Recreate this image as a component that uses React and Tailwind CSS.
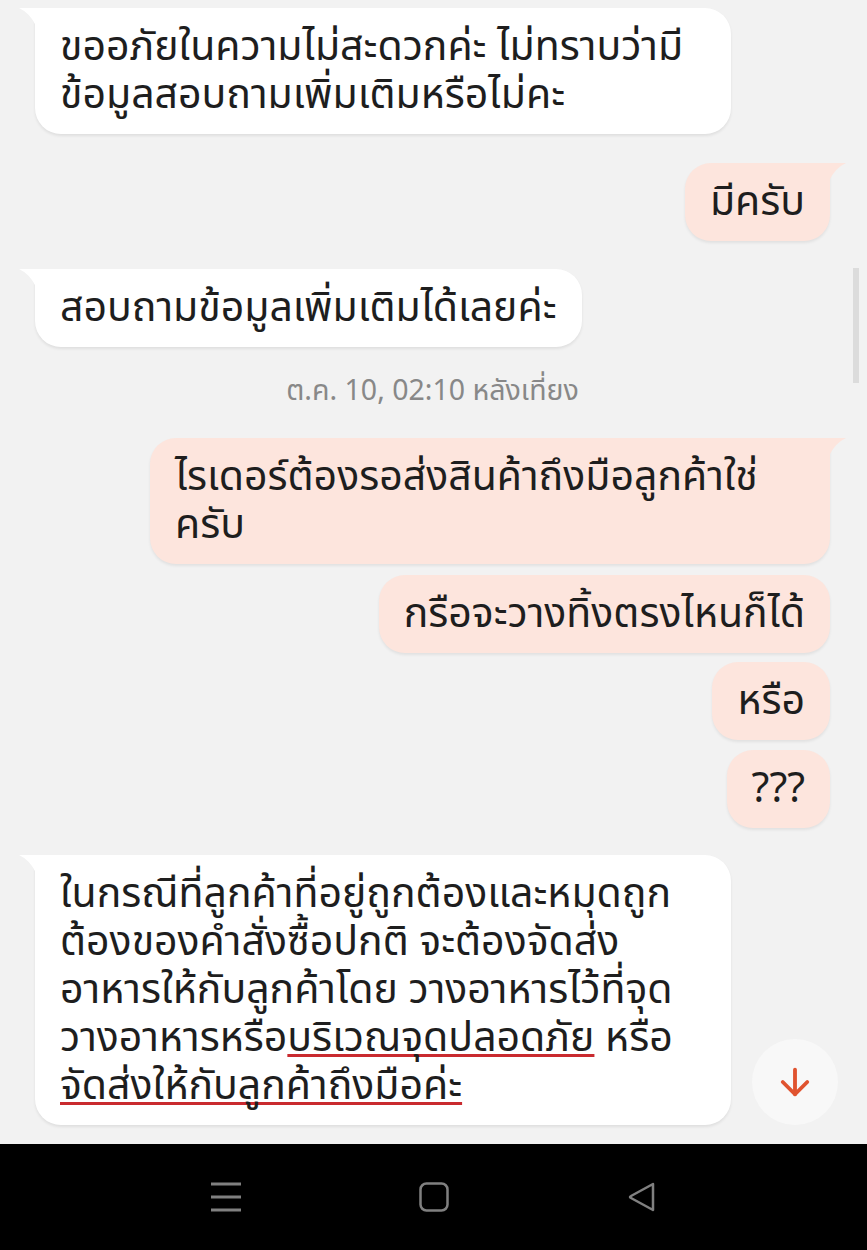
import { ArrowDown } from 'lucide-react'

const FONT = '"Noto Sans Thai", "Noto Sans Thai UI", "Noto Sans", "DejaVu Sans", sans-serif'

function Tail({ side, color }) {
    if (side === 'left') {
        return (
            <svg className="absolute top-0 -left-[16px]" width="17" height="18" viewBox="0 0 17 18">
                <path d="M0 0 H17 V18 Q11 5 0 0 Z" fill={color} />
            </svg>
        )
    }
    return (
        <svg className="absolute top-0 -right-[16px]" width="17" height="18" viewBox="0 0 17 18">
            <path d="M17 0 H0 V18 Q6 5 17 0 Z" fill={color} />
        </svg>
    )
}

function Received({ children, tail = true, className = '' }) {
    return (
        <div className={`relative self-start bg-white rounded-[26px] ${tail ? 'rounded-tl-none' : ''} px-[25px] py-[15px] shadow-[0_2px_3px_rgba(0,0,0,0.08)] ${className}`}>
            {tail && <Tail side="left" color="#ffffff" />}
            <p className="text-[41px] leading-[48px] text-[#1e1e1e] whitespace-nowrap">{children}</p>
        </div>
    )
}

function Sent({ children, tail = false, className = '' }) {
    return (
        <div className={`relative self-end bg-[#fde5dd] rounded-[26px] ${tail ? 'rounded-tr-none' : ''} px-[25px] py-[15px] shadow-[0_2px_3px_rgba(0,0,0,0.07)] ${className}`}>
            {tail && <Tail side="right" color="#fde5dd" />}
            <p className="text-[41px] leading-[48px] text-[#1e1e1e] whitespace-nowrap">{children}</p>
        </div>
    )
}

const mark = 'underline decoration-[#c92a2f] decoration-[3px] underline-offset-[3px] [text-decoration-skip-ink:none]'

export default function App() {
    return (
        <div className="w-[867px] h-[1250px] flex flex-col bg-[#f2f2f2]" style={{ fontFamily: FONT }}>
            <div className="relative flex-1 overflow-hidden flex flex-col pl-[35px] pr-[37px] pt-[8px]">
                <Received className="w-[696px]">
                    ขออภัยในความไม่สะดวกค่ะ ไม่ทราบว่ามี<br />ข้อมูลสอบถามเพิ่มเติมหรือไม่คะ
                </Received>

                <Sent tail className="mt-[29px]">มีครับ</Sent>

                <Received className="mt-[28px]">สอบถามข้อมูลเพิ่มเติมได้เลยค่ะ</Received>

                <div className="mt-[21px] text-center text-[28.5px] leading-[48px] text-[#888]">
                    ต.ค. 10, 02:10 หลังเที่ยง
                </div>

                <Sent tail className="mt-[22px] w-[680px]">
                    ไรเดอร์ต้องรอส่งสินค้าถึงมือลูกค้าใช่<br />ครับ
                </Sent>
                <Sent className="mt-[11px]">กรือจะวางทิ้งตรงไหนก็ได้</Sent>
                <Sent className="mt-[9px]">หรือ</Sent>
                <Sent className="mt-[10px]">???</Sent>

                <Received className="mt-[27px] w-[696px]">
                    ในกรณีที่ลูกค้าที่อยู่ถูกต้องและหมุดถูก<br />
                    ต้องของคำสั่งซื้อปกติ จะต้องจัดส่ง<br />
                    อาหารให้กับลูกค้าโดย วางอาหารไว้ที่จุด<br />
                    วางอาหารหรือ<span className={mark}>บริเวณจุดปลอดภัย</span> หรือ<br />
                    <span className={mark}>จัดส่งให้กับลูกค้าถึงมือค่ะ</span>
                </Received>

                {/* scrollbar */}
                <div className="absolute right-[8px] top-[268px] w-[6px] h-[115px] bg-[#dcdcdc]" />

                {/* jump to latest */}
                <button className="absolute left-[752px] top-[1039px] w-[86px] h-[86px] rounded-full bg-[#f8f8f8] flex items-center justify-center">
                    <ArrowDown size={42} strokeWidth={2.2} color="#e0532f" />
                </button>
            </div>

            <div className="h-[106px] bg-black flex items-center justify-center gap-[178px]">
                <svg width="30" height="30" viewBox="0 0 30 30">
                    <path d="M0 2 H30 M0 15 H30 M0 28 H30" stroke="#808080" strokeWidth="3" />
                </svg>
                <svg width="30" height="30" viewBox="0 0 30 30">
                    <rect x="1.5" y="1.5" width="27" height="27" rx="6" fill="none" stroke="#808080" strokeWidth="2.5" />
                </svg>
                <svg width="30" height="30" viewBox="0 0 30 30">
                    <path d="M26 2 L4 14 Q2 15 4 16 L26 28 Z" fill="none" stroke="#808080" strokeWidth="2.5" strokeLinejoin="round" />
                </svg>
            </div>
        </div>
    )
}
